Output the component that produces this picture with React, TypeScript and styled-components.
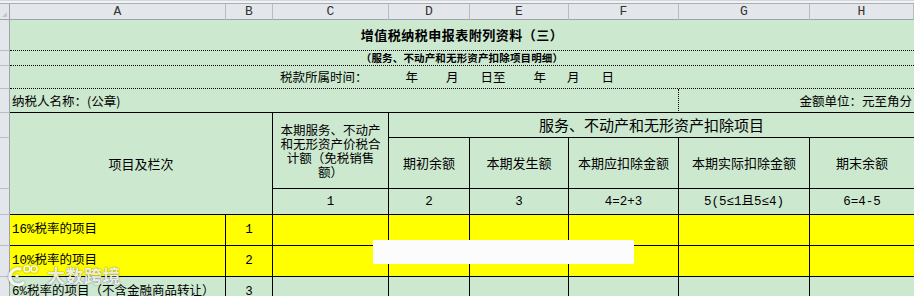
import React from "react";
import styled, { createGlobalStyle } from "styled-components";

// Spreadsheet view of 增值税纳税申报表附列资料（三）

type Line = "solid" | "dotted";

interface CellProps {
  $col: string;
  $row: string;
  $right?: Line;
  $bottom?: Line;
  $bg?: string;
  $justify?: string;
  $pad?: string;
}

const GREEN = "#cce8cf";
const YELLOW = "#ffff00";
const HEAD_BG = "#e3e6ea";
const HEAD_LINE = "#9da3aa";
const HEAD_SEP = "#b9bdc3";
const MARK = "rgba(255, 255, 255, 0.9)";

const GlobalStyle = createGlobalStyle`
  html, body {
    margin: 0;
    padding: 0;
    background: #ffffff;
  }
  body {
    font-family: "Noto Sans CJK SC", sans-serif;
  }
`;

const Sheet = styled.div`
  position: relative;
  width: 914px;
  height: 296px;
  overflow: hidden;
  display: grid;
  grid-template-columns: 10px 216px 47px 116px 81px 99px 110px 131px 104px;
  grid-template-rows: 4px 16px 31px 15px 23px 24px 25px 51px 26px 31px 31px 31px;
  font-family: "Noto Sans CJK SC", sans-serif;
  color: #000;
`;

const TopStrip = styled.div`
  grid-column: 1 / -1;
  grid-row: 1;
  box-sizing: border-box;
  background: #f1f2f4;
  border-top: 1px solid #d3d6da;
  border-bottom: 1px solid #a9aeb5;
`;

const Corner = styled.div`
  grid-column: 1;
  grid-row: 2;
  position: relative;
  box-sizing: border-box;
  background: ${HEAD_BG};
  border-right: 1px solid ${HEAD_LINE};
  border-bottom: 1px solid ${HEAD_LINE};

  &::after {
    content: "";
    position: absolute;
    right: 2px;
    bottom: 2px;
    width: 0;
    height: 0;
    border-left: 5px solid transparent;
    border-bottom: 5px solid #c3c7cc;
  }
`;

const ColHead = styled.div<{ $col: number }>`
  grid-column: ${(p) => p.$col};
  grid-row: 2;
  box-sizing: border-box;
  display: flex;
  align-items: center;
  justify-content: center;
  background: ${HEAD_BG};
  border-right: 1px solid ${HEAD_SEP};
  border-bottom: 1px solid ${HEAD_LINE};
  font-family: "Liberation Mono", monospace;
  font-size: 13px;
  color: #333;
`;

const RowHead = styled.div<{ $row: number }>`
  grid-column: 1;
  grid-row: ${(p) => p.$row};
  box-sizing: border-box;
  background: ${HEAD_BG};
  border-right: 1px solid ${HEAD_LINE};
  border-bottom: 1px solid ${HEAD_SEP};
`;

const Cell = styled.div<CellProps>`
  grid-column: ${(p) => p.$col};
  grid-row: ${(p) => p.$row};
  box-sizing: border-box;
  min-width: 0;
  overflow: hidden;
  display: flex;
  align-items: center;
  justify-content: ${(p) => p.$justify ?? "center"};
  padding: ${(p) => p.$pad ?? "0"};
  background: ${(p) => p.$bg ?? GREEN};
  border-right: ${(p) => (p.$right ? `1px ${p.$right} #000` : "none")};
  border-bottom: ${(p) => (p.$bottom ? `1px ${p.$bottom} #000` : "none")};
  font-size: 13px;
  line-height: 16px;
  white-space: nowrap;
`;

const TitleCell = styled(Cell)`
  font-size: 13px;
  font-weight: 700;
  letter-spacing: 0.5px;
`;

const SubtitleCell = styled(Cell)`
  font-size: 10.5px;
  font-weight: 700;
  letter-spacing: 0.15px;
`;

const InfoCell = styled(Cell)`
  font-size: 12.5px;
`;

const TimePart = styled.span<{ $left?: number }>`
  margin-left: ${(p) => p.$left ?? 0}px;
`;

const StackedText = styled.div`
  text-align: center;
  font-size: 12.5px;
  line-height: 14px;
  white-space: nowrap;
`;

const GroupHead = styled(Cell)`
  font-size: 15px;
`;

const IndexCell = styled(Cell)`
  font-family: "Liberation Mono", "Noto Sans CJK SC", monospace;
  font-size: 12.5px;
`;

const ItemCell = styled(Cell)`
  font-family: "Liberation Mono", "Noto Sans CJK SC", monospace;
  font-size: 12.5px;
`;

const Redaction = styled.div`
  position: absolute;
  left: 373px;
  top: 240px;
  width: 261px;
  height: 24px;
  background: #fcfcfc;
`;

const Watermark = styled.div`
  position: absolute;
  left: 8px;
  top: 264px;
  display: flex;
  align-items: center;
  gap: 9px;
  pointer-events: none;
`;

const WatermarkText = styled.span`
  font-family: "Noto Sans CJK SC", sans-serif;
  font-size: 18px;
  font-weight: 700;
  line-height: 22px;
  color: ${MARK};
  text-shadow: 0 0 1px rgba(0, 0, 0, 0.45), 0 0 2px rgba(0, 0, 0, 0.25);
  letter-spacing: 0.5px;
`;

const subHeads = ["期初余额", "本期发生额", "本期应扣除金额", "本期实际扣除金额", "期末余额"];
const numbers = ["1", "2", "3", "4=2+3", "5(5≤1且5≤4)", "6=4-5"];

const dataRows = [
  { label: "16%税率的项目", index: "1", bg: YELLOW },
  { label: "10%税率的项目", index: "2", bg: YELLOW },
  { label: "6%税率的项目（不含金融商品转让）", index: "3", bg: GREEN },
];

const Logo: React.FC = () => (
  <svg width="30" height="22" viewBox="0 0 30 22" style={{ filter: "drop-shadow(0 0 1px rgba(0,0,0,0.45))" }}>
    <path d="M12 5 A8 8 0 1 0 15 19" fill="none" stroke={MARK} strokeWidth="3.2" strokeLinecap="round" />
    <circle cx="9" cy="12" r="1.8" fill={MARK} />
    <circle cx="19" cy="5" r="3" fill="none" stroke={MARK} strokeWidth="1.6" />
    <circle cx="26" cy="5" r="3" fill="none" stroke={MARK} strokeWidth="1.6" />
  </svg>
);

export default function App() {
  const letters = ["A", "B", "C", "D", "E", "F", "G", "H"];

  return (
    <>
      <GlobalStyle />
      <Sheet>
        <TopStrip />
        <Corner />
        {letters.map((l, i) => (
          <ColHead key={l} $col={i + 2}>
            {l}
          </ColHead>
        ))}

        {[3, 4, 5, 6, 7, 8, 9, 10, 11, 12].map((r) => (
          <RowHead key={r} $row={r} />
        ))}

        <TitleCell $col="2 / -1" $row="3" $bottom="dotted">
          增值税纳税申报表附列资料（三）
        </TitleCell>
        <SubtitleCell $col="2 / -1" $row="4" $bottom="dotted">
          （服务、不动产和无形资产扣除项目明细）
        </SubtitleCell>
        <InfoCell $col="2 / -1" $row="5" $bottom="dotted" $justify="flex-start" $pad="0 0 0 270px">
          <TimePart>税款所属时间：</TimePart>
          <TimePart $left={38}>年</TimePart>
          <TimePart $left={28}>月</TimePart>
          <TimePart $left={22}>日至</TimePart>
          <TimePart $left={28}>年</TimePart>
          <TimePart $left={21}>月</TimePart>
          <TimePart $left={22}>日</TimePart>
        </InfoCell>
        <InfoCell $col="2 / 8" $row="6" $right="dotted" $bottom="solid" $justify="flex-start" $pad="0 0 0 2px">
          纳税人名称：(公章)
        </InfoCell>
        <InfoCell $col="8 / -1" $row="6" $bottom="solid" $justify="flex-end" $pad="0 2px 0 0">
          金额单位：元至角分
        </InfoCell>

        <Cell $col="2 / 4" $row="7 / 10" $right="solid" $bottom="solid">
          项目及栏次
        </Cell>
        <Cell $col="4" $row="7 / 9" $right="solid" $bottom="solid">
          <StackedText>
            本期服务、不动产
            <br />
            和无形资产价税合
            <br />
            计额（免税销售
            <br />
            额）
          </StackedText>
        </Cell>
        <GroupHead $col="5 / -1" $row="7" $bottom="solid">
          服务、不动产和无形资产扣除项目
        </GroupHead>
        {subHeads.map((h, i) => (
          <Cell key={h} $col={String(i + 5)} $row="8" $right={i < 4 ? "solid" : undefined} $bottom="solid">
            {h}
          </Cell>
        ))}
        {numbers.map((n, i) => (
          <IndexCell key={n} $col={String(i + 4)} $row="9" $right={i < 5 ? "solid" : undefined} $bottom="solid">
            {n}
          </IndexCell>
        ))}

        {dataRows.map((d, r) => (
          <React.Fragment key={d.index}>
            <ItemCell $col="2" $row={String(r + 10)} $bg={d.bg} $right="solid" $bottom="solid" $justify="flex-start" $pad="0 0 0 2px">
              {d.label}
            </ItemCell>
            <IndexCell $col="3" $row={String(r + 10)} $bg={d.bg} $right="solid" $bottom="solid">
              {d.index}
            </IndexCell>
            {[4, 5, 6, 7, 8, 9].map((c) => (
              <Cell key={c} $col={String(c)} $row={String(r + 10)} $bg={d.bg} $right={c < 9 ? "solid" : undefined} $bottom="solid" />
            ))}
          </React.Fragment>
        ))}

        <Redaction />
        <Watermark>
          <Logo />
          <WatermarkText>大数跨境</WatermarkText>
        </Watermark>
      </Sheet>
    </>
  );
}
